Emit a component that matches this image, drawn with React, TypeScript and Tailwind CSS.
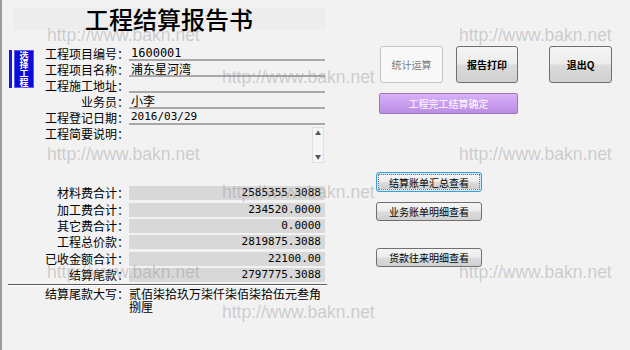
import React from 'react';

const cjk = "font-['Noto_Sans_CJK_SC',sans-serif]";
const mono = "font-['DejaVu_Sans_Mono','Noto_Sans_CJK_SC',monospace]";

// win7 style grey button face
const face =
  'bg-[linear-gradient(180deg,#f4f4f4_0%,#ececec_48%,#dcdcdc_52%,#cfcfcf_100%)] border border-[#707070] rounded-[3px]';

const watermarks = [
  'left-[45px] top-[25px]',
  'left-[457px] top-[25px]',
  'left-[220px] top-[67px]',
  'left-[45px] top-[144px]',
  'left-[457px] top-[144px]',
  'left-[220px] top-[182px]',
  'left-[45px] top-[262px]',
  'left-[457px] top-[262px]',
  'left-[220px] top-[302px]',
];

const infoRows = [
  { label: '工程项目编号：', value: '1600001', cls: `${mono} text-[12px]` },
  { label: '工程项目名称：', value: '浦东星河湾', cls: 'text-[12px]' },
  { label: '工程施工地址：', value: '', cls: 'text-[12px]' },
  { label: '业务员：', value: '小李', cls: 'text-[12px]' },
  { label: '工程登记日期：', value: '2016/03/29', cls: `${mono} text-[11px]` },
];

const moneyRows = [
  { label: '材料费合计：', value: '2585355.3088' },
  { label: '加工费合计：', value: '234520.0000' },
  { label: '其它费合计：', value: '0.0000' },
  { label: '工程总价款：', value: '2819875.3088' },
  { label: '已收金额合计：', value: '22100.00' },
  { label: '结算尾款：', value: '2797775.3088' },
];

const App: React.FC = () => {
  return (
    <div className={`w-[630px] h-[350px] bg-[#f2f2f2] relative overflow-hidden flex border-l-2 border-[#9c9c9c] text-black ${cjk}`}>
      {/* Left: report form */}
      <div className="w-[328px] pt-[8px]">
        <div className="ml-[11px] w-[312px] h-[22px] bg-[#ededed] flex items-center justify-center text-[24px] leading-[22px] font-medium">
          工程结算报告书
        </div>

        <div className="mt-[15px] flex">
          <div className="w-[41px] pl-[7px] pt-[5px]">
            <div className="flex gap-[2px]">
              <div className="w-[3px] h-[38px] bg-[#1414e6]"></div>
              <div className="w-[20px] h-[38px] bg-[#0a0ad8] border border-[#5a5af0] flex flex-col items-center justify-center text-white font-bold text-[9px] leading-[9px]">
                <span>选</span>
                <span>择</span>
                <span>工</span>
                <span>程</span>
              </div>
            </div>
          </div>

          <div className="w-[282px] text-[12px]">
            {infoRows.map(r => (
              <div key={r.label} className="h-[16px] flex">
                <div className="w-[86px] text-right leading-[17px] whitespace-nowrap">{r.label}</div>
                <div className={`flex-1 border-b-2 border-[#a8a8a8] pl-[2px] leading-[16px] ${r.cls}`}>{r.value}</div>
              </div>
            ))}
            <div className="h-[40px] flex">
              <div className="w-[86px] text-right leading-[17px]">工程简要说明：</div>
              <div className="flex-1 flex justify-end pt-[2px] pr-[1px]">
                <div className="w-[12px] h-[36px] border border-[#e0e0e0] bg-[#f6f6f6] flex flex-col justify-between items-center py-[2px] text-[#555] text-[6px] leading-[6px]">
                  <span>▲</span>
                  <span>▼</span>
                </div>
              </div>
            </div>
          </div>
        </div>

        <div className="mt-[20px] ml-[41px] w-[282px] text-[12px]">
          {moneyRows.map(r => (
            <div key={r.label} className="h-[16.4px] flex items-center">
              <div className="w-[86px] text-right leading-[14px] whitespace-nowrap">{r.label}</div>
              <div className={`flex-1 h-[14px] bg-[#d8d8d8] text-right pr-[4px] text-[11px] leading-[14px] ${mono}`}>{r.value}</div>
            </div>
          ))}
        </div>

        <div className="mt-[1px] ml-[6px] w-[319px] border-t border-[#5c5c5c] border-b border-b-[#ffffff]"></div>

        <div className="ml-[41px] w-[282px] flex text-[12px] leading-[13px] pt-[1px]">
          <div className="w-[86px] text-right whitespace-nowrap">结算尾款大写：</div>
          <div className="w-[196px]">贰佰柒拾玖万柒仟柒佰柒拾伍元叁角捌厘</div>
        </div>
      </div>

      {/* Right: actions */}
      <div className="w-[300px] pt-[46px] text-[10px]">
        <div className="flex ml-[50px]">
          <div className="w-[63px] h-[37px] bg-[#f8f8f8] border border-[#c4c4c4] rounded-[3px] flex items-center justify-center text-[#7c7c7c]">
            统计运算
          </div>
          <div className={`ml-[13px] w-[62px] h-[37px] ${face} flex items-center justify-center font-bold`}>
            报告打印
          </div>
          <div className={`ml-[31px] w-[63px] h-[37px] ${face} flex items-center justify-center font-bold`}>
            退出Q
          </div>
        </div>

        <div className="mt-[10px] ml-[49px] w-[139px] h-[21px] rounded-[2px] border border-[#9a78b8] bg-[linear-gradient(180deg,#d9b2f8_0%,#c99ef0_50%,#bb8ee4_100%)] flex items-center justify-center text-white">
          工程完工结算确定
        </div>

        <div className="mt-[58px] ml-[46px] w-[106px] h-[20px] rounded-[3px] border border-[#3c9fd8] p-[1px] bg-[#cfe9f7]">
          <div className="w-full h-full bg-[linear-gradient(180deg,#f4f4f4_0%,#ececec_48%,#dcdcdc_52%,#cfcfcf_100%)] border border-dotted border-[#777] flex items-center justify-center">
            结算账单汇总查看
          </div>
        </div>

        <div className={`mt-[10px] ml-[46px] w-[106px] h-[19px] ${face} flex items-center justify-center`}>
          业务账单明细查看
        </div>

        <div className={`mt-[27px] ml-[46px] w-[106px] h-[19px] ${face} flex items-center justify-center`}>
          货款往来明细查看
        </div>
      </div>

      {/* watermark overlay */}
      {watermarks.map(w => (
        <div
          key={w}
          className={`absolute ${w} pointer-events-none whitespace-nowrap text-[17.5px] leading-[20px] text-[rgba(140,140,140,0.38)] font-['Liberation_Sans',sans-serif]`}
        >
          http://www.bakn.net
        </div>
      ))}
    </div>
  );
};

export default App;
